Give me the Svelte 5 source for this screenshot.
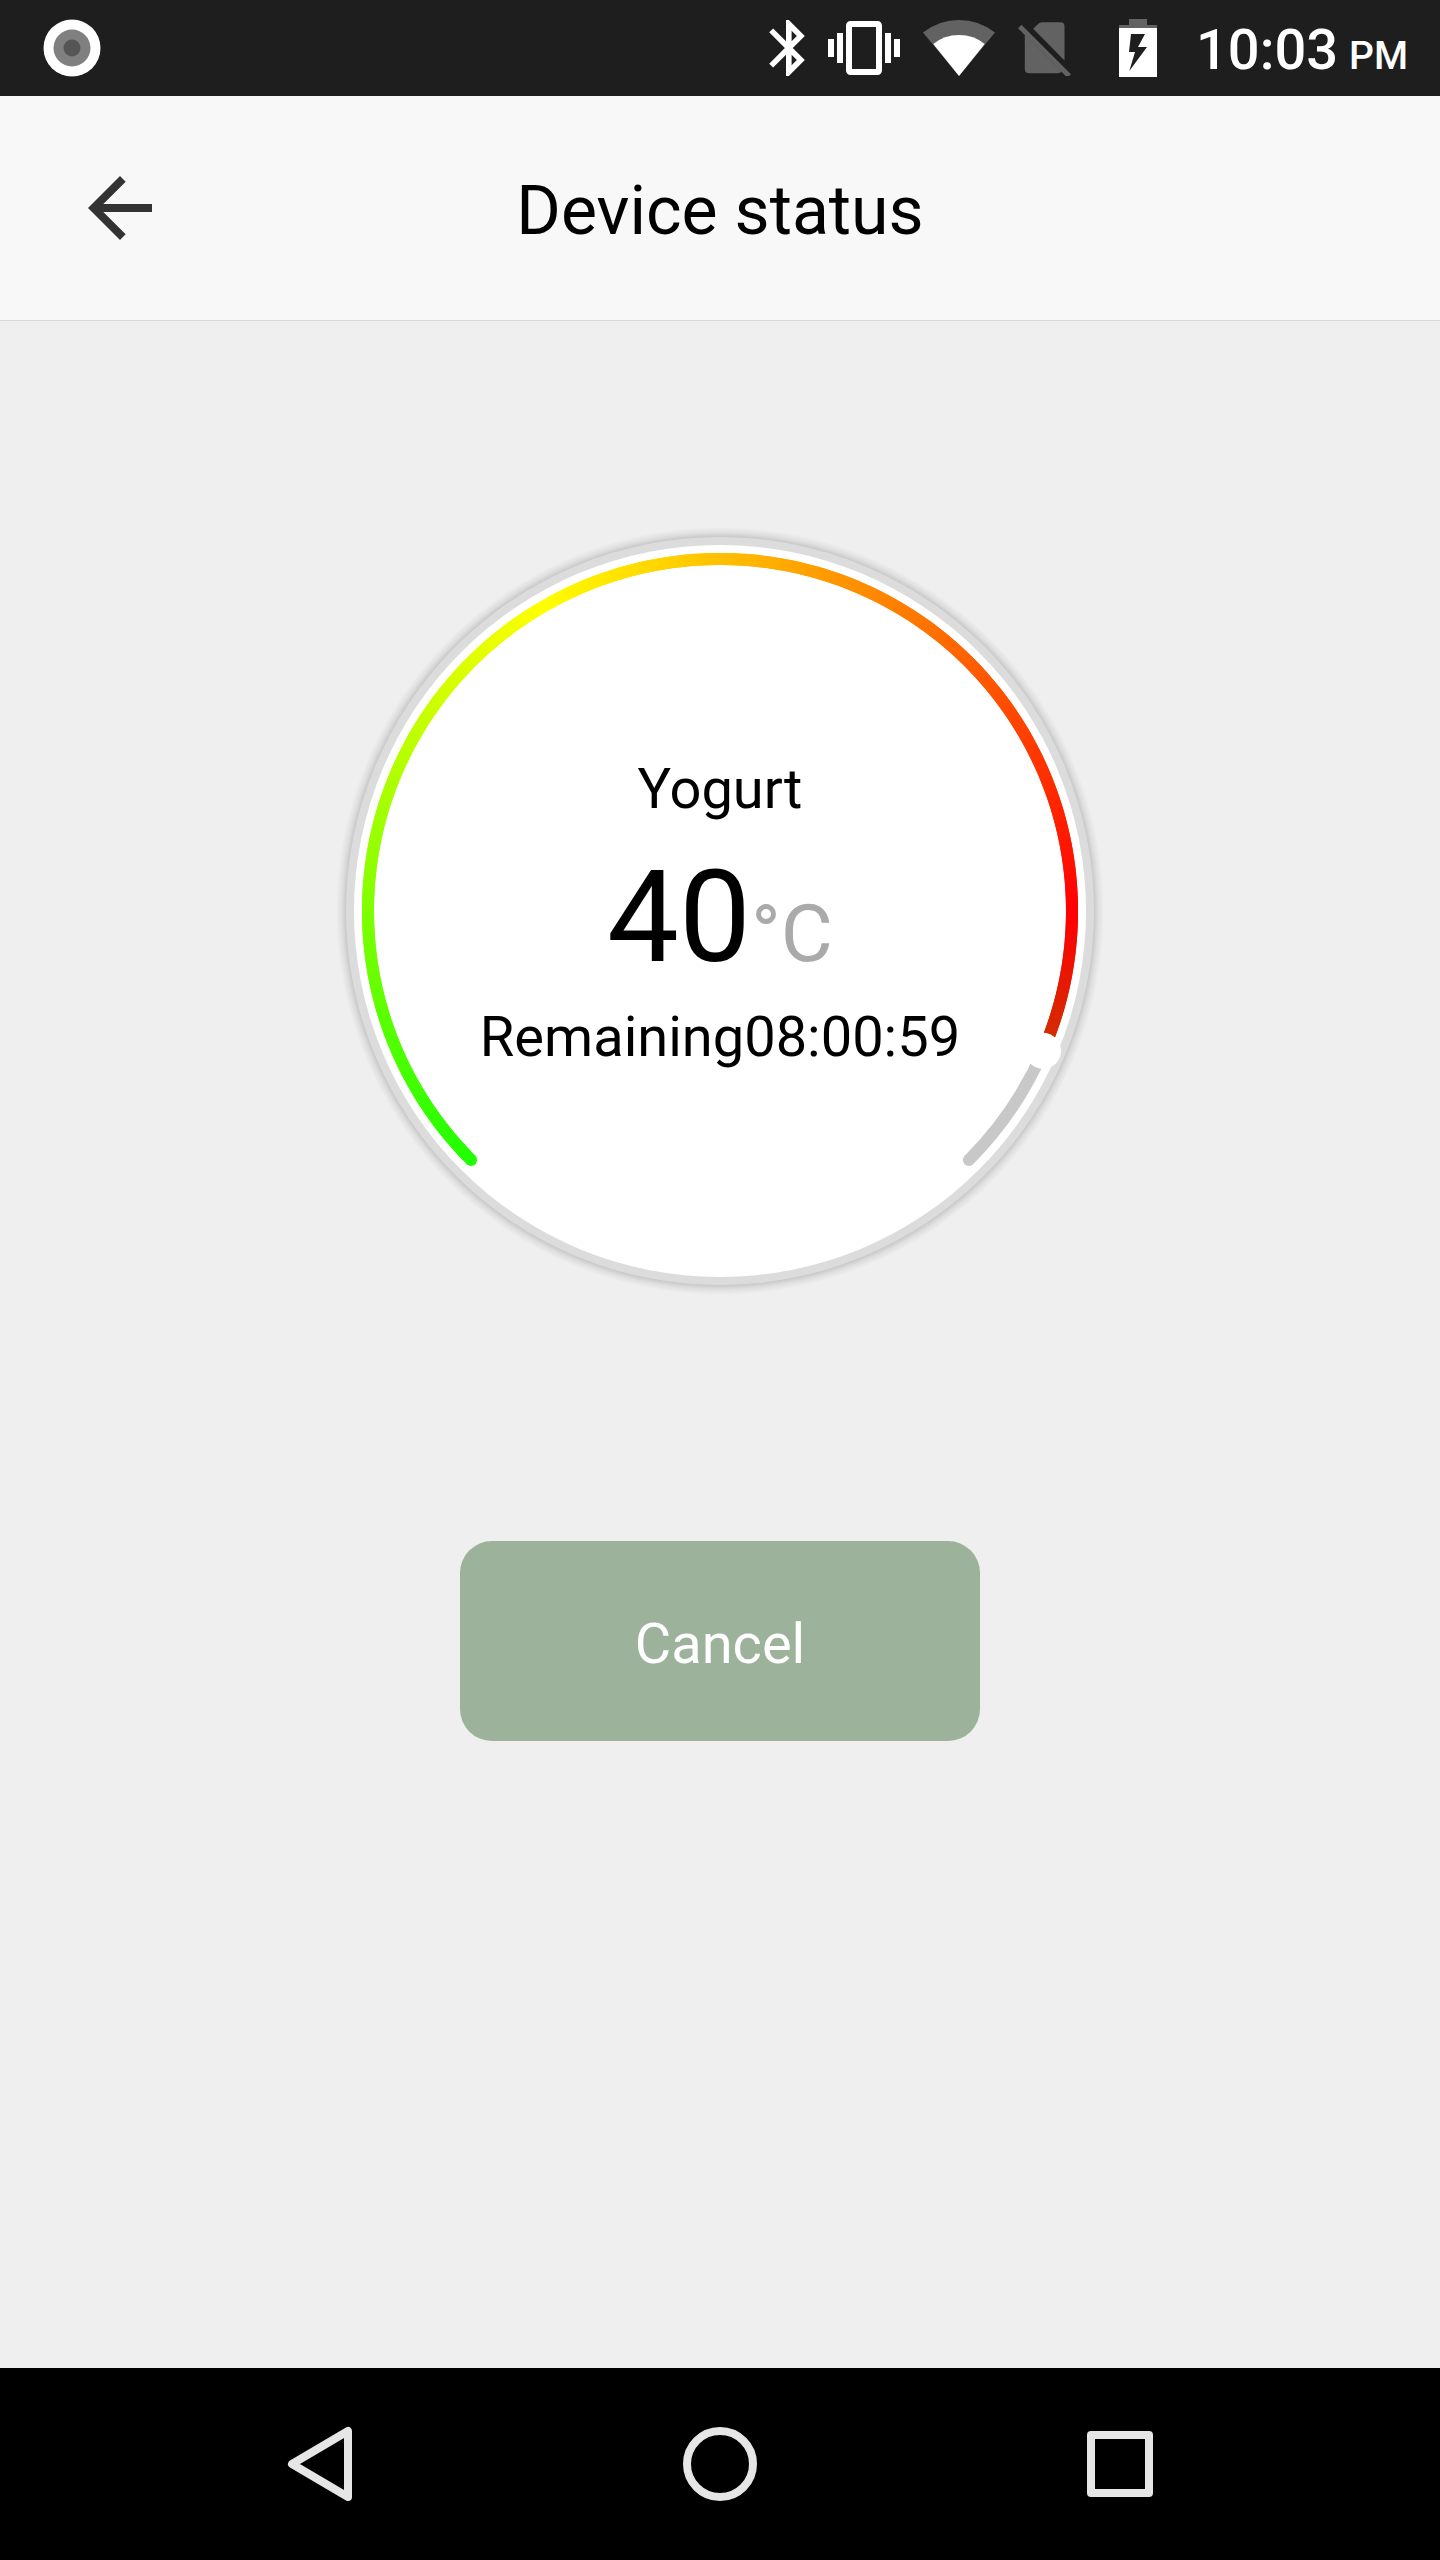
<script>
  const CENTER = 380;
  const RADIUS = 352;
  const START = 135;
  const SWEEP = 270;

  let mode = $state('Yogurt');
  let temperature = $state(40);
  let remaining = $state('08:00:59');
  let progress = $state(0.92);

  // Colour wheel measured clockwise from three o'clock.
  const stops = [
    [255, 0, 0],
    [0, 255, 0],
    [255, 255, 0],
    [255, 0, 0]
  ];

  function point(angle) {
    const rad = (angle * Math.PI) / 180;
    return [CENTER + RADIUS * Math.cos(rad), CENTER + RADIUS * Math.sin(rad)];
  }

  function arc(from, to) {
    const [x1, y1] = point(from);
    const [x2, y2] = point(to);
    return `M${x1} ${y1}A${RADIUS} ${RADIUS} 0 0 1 ${x2} ${y2}`;
  }

  function color(angle) {
    const t = (((angle % 360) + 360) % 360) / 120;
    const i = Math.floor(t);
    const mix = stops[i].map((c, k) => Math.round(c + (stops[i + 1][k] - c) * (t - i)));
    return `rgb(${mix.join(',')})`;
  }

  const end = $derived(START + SWEEP * progress);
  const knob = $derived(point(end));
  const startPoint = point(START);

  // One-degree slices, each running under the next so that no seams show.
  const slices = $derived(
    Array.from({ length: Math.floor(end - START) }, (_, i) => {
      const a = START + i;
      return { d: arc(a, Math.min(a + 2, end)), stroke: color(a + 0.5) };
    })
  );
</script>

<div class="screen">
  <div class="status">
    <svg class="camera" viewBox="0 0 58 58" aria-hidden="true">
      <circle cx="29" cy="29" r="28.5" fill="#fff" />
      <circle cx="29" cy="29" r="18.5" fill="#808080" />
      <circle cx="29" cy="29" r="8.5" fill="#555" />
    </svg>
    <div class="tray">
      <svg width="36" height="56" viewBox="5 2 12.71 20" fill="#fff" aria-hidden="true">
        <path d="M17.71 7.71L12 2h-1v7.59L6.41 5 5 6.41 10.59 12 5 17.59 6.41 19 11 14.41V22h1l5.71-5.71-4.3-4.29 4.3-4.29zM13 5.83l1.88 1.88L13 9.59V5.83zm1.88 10.46L13 18.17v-3.76l1.88 1.88z" />
      </svg>
      <svg width="72" height="72" viewBox="0 0 24 24" fill="#fff" aria-hidden="true">
        <path d="M0 15h2V9H0v6zm3 2h2V7H3v10zm19-8v6h2V9h-2zm-3 8h2V7h-2v10zM16.5 3h-9C6.67 3 6 3.67 6 4.5v15c0 .83.67 1.5 1.5 1.5h9c.83 0 1.5-.67 1.5-1.5v-15c0-.83-.67-1.5-1.5-1.5zM16 19H8V5h8v14z" />
      </svg>
      <svg width="72" height="56" viewBox="0 0 72 56" aria-hidden="true">
        <path d="M0 12.5Q16 0 36 0T72 12.5L36 56z" fill="#626262" />
        <path d="M10.3 24Q21 15 36 15T61.7 24L36 56z" fill="#fff" />
      </svg>
      <svg width="54" height="56" viewBox="0 0 54 56" aria-hidden="true">
        <path d="M15.2 8.8L20 4Q21.7 2.3 24 2.3H42.5Q46.5 2.3 46.5 6.3V40.5zM6.8 14.5L43.500 51.5Q42.8 53.3 40 53.3H11Q6.8 53.3 6.8 49z" fill="#626262" />
        <path d="M1.7 6.5L51.2 56" stroke="#626262" stroke-width="5" />
      </svg>
      <svg class="battery" width="38" height="58" viewBox="0 0 38 58" aria-hidden="true">
        <path d="M0 6H10V0H28V6H38V10H0z" fill="#626262" />
        <path d="M0 9H38V58H0z" fill="#fff" />
        <path d="M12 15H26L19 28H28L10.3 52 16 33H10z" fill="#1e1e1e" />
      </svg>
      <time class="clock">10:03 <small>PM</small></time>
    </div>
  </div>

  <header class="bar">
    <button class="back" aria-label="Back">
      <svg width="96" height="96" viewBox="0 0 24 24" fill="#333" aria-hidden="true">
        <path d="M20 11H7.83l5.59-5.59L12 4l-8 8 8 8 1.41-1.41L7.83 13H20v-2z" />
      </svg>
    </button>
    <h1>Device status</h1>
  </header>

  <main>
    <section class="dial" aria-label="Program progress">
      <svg viewBox="0 0 760 760" aria-hidden="true">
        <defs>
          <radialGradient id="halo" gradientUnits="userSpaceOnUse" cx="380" cy="380" r="384">
            <stop offset="0.974" stop-color="#000" stop-opacity="0.16" />
            <stop offset="0.985" stop-color="#000" stop-opacity="0.07" />
            <stop offset="1" stop-color="#000" stop-opacity="0" />
          </radialGradient>
        </defs>
        <circle cx="380" cy="380" r="384" fill="url(#halo)" />
        <circle cx="380" cy="380" r="374" fill="#dcdcdc" />
        <circle cx="380" cy="380" r="366" fill="#fff" />
        <path class="track" d={arc(end, START + SWEEP)} />
        <circle cx={startPoint[0]} cy={startPoint[1]} r="6" fill={color(START)} />
        {#each slices as slice}
          <path class="slice" d={slice.d} stroke={slice.stroke} />
        {/each}
        <circle cx={knob[0]} cy={knob[1]} r="18" fill="#fff" />
      </svg>
      <div class="reading">
        <p>{mode}</p>
        <p class="temp">{temperature}<span>°C</span></p>
        <p>Remaining{remaining}</p>
      </div>
    </section>
    <button class="cancel">Cancel</button>
  </main>

  <nav class="keys" aria-label="System">
    <button aria-label="Back">
      <svg width="80" height="80" viewBox="0 0 80 80" aria-hidden="true">
        <path d="M12 40L68 7V73z" />
      </svg>
    </button>
    <button aria-label="Home">
      <svg width="80" height="80" viewBox="0 0 80 80" aria-hidden="true">
        <circle cx="40" cy="40" r="33" />
      </svg>
    </button>
    <button aria-label="Recent apps">
      <svg width="80" height="80" viewBox="0 0 80 80" aria-hidden="true">
        <rect x="11" y="11" width="58" height="58" />
      </svg>
    </button>
  </nav>
</div>

<style>
  :global(body) {
    margin: 0;
    background: #efefef;
  }

  .screen {
    display: flex;
    flex-direction: column;
    min-height: 100vh;
    font-family: Roboto, "Liberation Sans", sans-serif;
    font-size: 56px;
    line-height: 64px;
    color: #000;
  }

  svg {
    display: block;
    flex-shrink: 0;
  }

  button {
    padding: 0;
    border: 0;
    background: none;
    font: inherit;
    cursor: pointer;
  }

  .status {
    display: flex;
    align-items: center;
    justify-content: space-between;
    height: 96px;
    padding: 0 32px 0 43px;
    background: #1e1e1e;
    color: #fff;
  }

  .camera {
    width: 58px;
    height: 58px;
  }

  .tray {
    display: flex;
    align-items: center;
    gap: 23px;
  }

  .battery {
    margin: 0 16px 0 24px;
  }

  .clock {
    padding-top: 10px;
    font-weight: 500;
    white-space: nowrap;
  }

  .clock small {
    margin-left: -3px;
    font-size: 39px;
  }

  .bar {
    display: grid;
    grid-template-columns: 1fr auto 1fr;
    align-items: center;
    height: 224px;
    padding: 0 72px;
    border-bottom: 1px solid #d8d8d8;
    background: #f8f8f8;
  }

  .back {
    justify-self: start;
  }

  h1 {
    margin: 0;
    padding-top: 6px;
    font-size: 68px;
    font-weight: 400;
    line-height: 80px;
  }

  main {
    display: flex;
    flex: 1;
    flex-direction: column;
    align-items: center;
    gap: 250px;
    padding: 210px 24px;
  }

  .dial {
    display: grid;
    width: 100%;
    max-width: 760px;
  }

  .dial > * {
    grid-area: 1 / 1;
  }

  .dial svg {
    width: 100%;
    overflow: visible;
  }

  .track,
  .slice {
    fill: none;
    stroke-width: 12;
  }

  .track {
    stroke: #c8c8c8;
    stroke-linecap: round;
  }

  .reading {
    align-self: center;
    padding-top: 4px;
    text-align: center;
  }

  p {
    margin: 0;
  }

  .temp {
    padding-top: 8px;
    font-size: 128px;
    line-height: 176px;
  }

  .temp span {
    font-size: 80px;
    line-height: 80px;
    color: #aaa;
  }

  .cancel {
    width: 100%;
    max-width: 520px;
    height: 200px;
    padding-top: 6px;
    border-radius: 32px;
    background: #9db29b;
    color: #fff;
  }

  .keys {
    display: grid;
    grid-template-columns: repeat(3, 1fr);
    height: 192px;
    padding: 0 120px;
    background: #000;
  }

  .keys button {
    display: flex;
    align-items: center;
    justify-content: center;
  }

  .keys svg {
    fill: none;
    stroke: #e6e6e6;
    stroke-width: 8;
    stroke-linejoin: round;
  }
</style>
